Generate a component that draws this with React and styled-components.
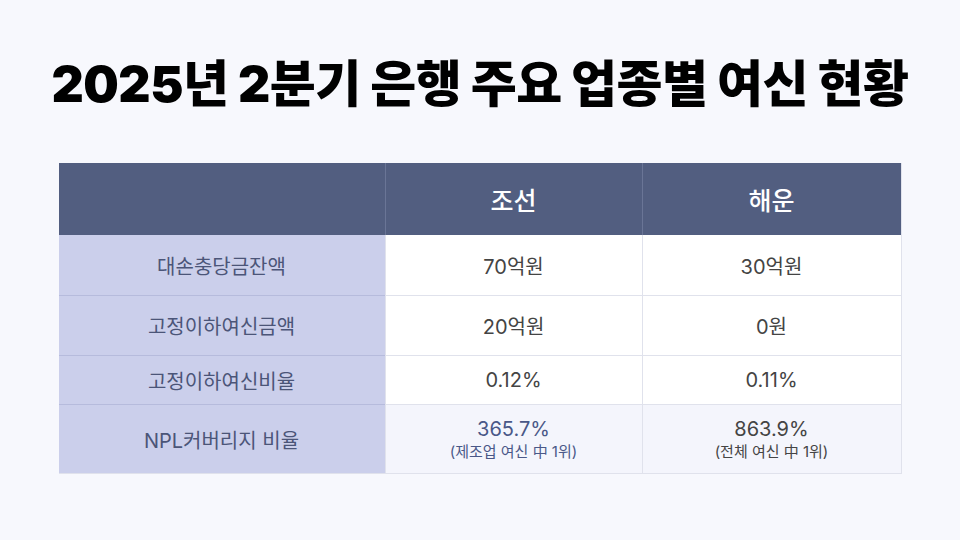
import styled, { createGlobalStyle } from 'styled-components'

const GlobalStyle = createGlobalStyle`
  html, body {
    margin: 0;
    padding: 0;
    background: #f7f8fd;
  }
  body {
    font-family: Inter, 'Noto Sans CJK KR', 'Noto Sans', sans-serif;
  }
`

const Page = styled.div`
  width: 960px;
  height: 540px;
  box-sizing: border-box;
  background: #f7f8fd;
  display: flex;
  flex-direction: column;
  align-items: center;
  padding-top: 44px;
`

const Title = styled.h1`
  margin: 0;
  font-family: Inter, 'Noto Sans CJK KR', sans-serif;
  font-size: 50px;
  font-weight: 900;
  color: #000;
  letter-spacing: -0.5px;
  line-height: 80px;
`

const Table = styled.div`
  margin-top: 39px;
  width: 842px;
  display: grid;
  grid-template-columns: 326px 257px 259px;
  grid-template-rows: 72px 60px 60px 49px 69px;
  border-right: 1px solid #e0e2ec;
  border-bottom: 1px solid #e0e2ec;
`

const HeadCell = styled.div`
  background: #525e80;
  color: #fff;
  font-size: 25px;
  font-weight: 500;
  display: flex;
  align-items: center;
  justify-content: center;
  border-left: 1px solid ${p => (p.$first ? '#525e80' : '#6a7596')};
`

const LabelCell = styled.div`
  background: #cbcfeb;
  color: #4b5578;
  font-size: 20px;
  display: flex;
  align-items: center;
  justify-content: center;
  border-top: ${p => (p.$top ? 'none' : '1px solid #b6bbdc')};
`

const ValueCell = styled.div`
  background: ${p => (p.$shade ? '#f4f5fc' : '#fff')};
  color: #444;
  font-size: 20px;
  display: flex;
  flex-direction: column;
  align-items: center;
  justify-content: center;
  border-left: 1px solid #e0e2ec;
  border-top: ${p => (p.$top ? 'none' : '1px solid #e0e2ec')};
`

const Main = styled.span`
  color: ${p => (p.$accent ? '#4a5888' : '#444')};
  line-height: 25px;
`

const Sub = styled.span`
  font-size: 15px;
  line-height: 20px;
  color: ${p => (p.$accent ? '#4a5888' : '#444')};
`

const rows = [
  { label: '대손충당금잔액', a: '70억원', b: '30억원' },
  { label: '고정이하여신금액', a: '20억원', b: '0원' },
  { label: '고정이하여신비율', a: '0.12%', b: '0.11%' },
]

export default function App() {
  return (
    <Page>
      <GlobalStyle />
      <Title>2025년 2분기 은행 주요 업종별 여신 현황</Title>
      <Table>
        <HeadCell $first />
        <HeadCell>조선</HeadCell>
        <HeadCell>해운</HeadCell>
        {rows.map((r, i) => [
          <LabelCell key={'l' + i} $top={i === 0}>{r.label}</LabelCell>,
          <ValueCell key={'a' + i} $top={i === 0}>{r.a}</ValueCell>,
          <ValueCell key={'b' + i} $top={i === 0}>{r.b}</ValueCell>,
        ])}
        <LabelCell>NPL커버리지 비율</LabelCell>
        <ValueCell $shade>
          <Main $accent>365.7%</Main>
          <Sub $accent>(제조업 여신 中 1위)</Sub>
        </ValueCell>
        <ValueCell $shade>
          <Main>863.9%</Main>
          <Sub>(전체 여신 中 1위)</Sub>
        </ValueCell>
      </Table>
    </Page>
  )
}
